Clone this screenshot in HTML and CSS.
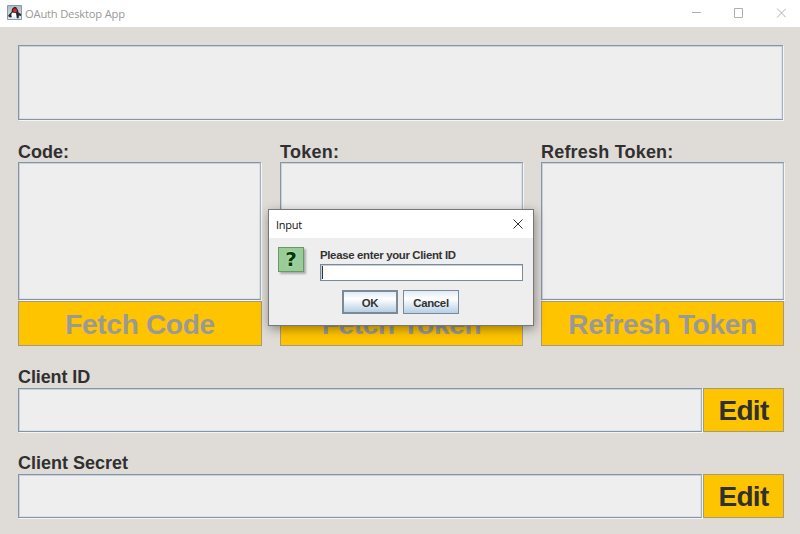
FILE: index.html
```html
<!DOCTYPE html>
<html lang="en">
<head>
<meta charset="utf-8">
<title>OAuth Desktop App</title>
<link rel="stylesheet" href="styles.css">
</head>
<body>
<header class="titlebar">
  <svg class="app-icon" width="15" height="15" viewBox="0 0 15 15">
    <defs><linearGradient id="tile" x2="0" y2="1"><stop stop-color="#a9b7c6"/><stop offset="1" stop-color="#e8edf2"/></linearGradient></defs>
    <path fill="url(#tile)" stroke="#8d98a5" d="M.5.5h14v14H.5z"/>
    <path fill="#252a30" d="M7 2h2l2 3 .5 2.500L14 9v2l-2-.5-.5 3L9.500 13 9 8 5 7.500 4.500 10l.5 2-2 .5L1 11l1-1.500L4.500 7 5 4z"/>
    <path fill="#fff" d="M5 8 9 8.500l.5 4.500-2-1.500-2.500 1L4.500 10z"/>
    <circle cx="8" cy="5.500" r="2" fill="#df2620"/>
  </svg>
  <span class="app-title">OAuth Desktop App</span>
  <svg class="window-controls" width="94" height="10" viewBox="0 0 94 10" fill="none" stroke="#b0b0b0">
    <path d="M0 4.500h9M42.500.5h8v9h-8zM85 .5l9 9M94 .5l-9 9"/>
  </svg>
</header>
<main class="content">
  <div class="field status"></div>
  <div class="columns">
    <section><h2 class="label code">Code:</h2><div class="field area"></div><button class="action" disabled>Fetch Code</button></section>
    <section><h2 class="label token">Token:</h2><div class="field area"></div><button class="action" disabled>Fetch Token</button></section>
    <section><h2 class="label refresh">Refresh Token:</h2><div class="field area"></div><button class="action" disabled>Refresh Token</button></section>
  </div>
  <section class="credential"><h2 class="label client">Client ID</h2><div class="row"><div class="field"></div><button class="action">Edit</button></div></section>
  <section class="credential"><h2 class="label secret">Client Secret</h2><div class="row"><div class="field"></div><button class="action">Edit</button></div></section>
</main>
<div class="dialog" role="dialog">
  <div class="dialog-title"><span>Input</span>
    <svg width="10" height="10" viewBox="0 0 10 10" stroke="#333"><path d="m.5.5 9 9M9.500.5l-9 9"/></svg>
  </div>
  <div class="dialog-body">
    <div class="question">?</div>
    <div class="prompt"><div class="prompt-text">Please enter your Client ID</div><div class="entry"><i class="caret"></i></div></div>
  </div>
  <div class="dialog-actions"><button class="metal default">OK</button><button class="metal">Cancel</button></div>
</div>
</body>
</html>
```
FILE: styles.css
```css
* { box-sizing: border-box; }
body { margin: 0; width: 800px; height: 534px; overflow: hidden; background: #dfdbd6; font-family: "Liberation Sans", sans-serif; }
.titlebar { height: 27px; background: #fff; display: flex; align-items: center; padding: 0 14px 0 7px; }
.app-icon { margin-top: -2px; }
.app-title { margin-left: 3px; font: 11.2px "Open Sans", sans-serif; color: #999; letter-spacing: -.2px; }
.window-controls { margin-left: auto; margin-top: -1px; }
.content { padding: 18px 16px 0 18px; }
.field { background: #eee; border: 1px solid #8495a6; border-right-color: #a3b0bd; box-shadow: 1px 1px #f5f5f5, inset 1px 1px #c9d1d9, inset -1px -1px #dce1e7; }
.status { width: 765px; height: 75px; }
.columns { display: grid; grid-template-columns: 244px 243px 243px; column-gap: 18px; margin-top: 21px; }
.label { margin: 0; height: 21px; font-size: 18px; line-height: 23px; font-weight: bold; color: #303030; white-space: nowrap; }
.token { letter-spacing: .25px; }
.refresh { letter-spacing: .2px; }
.client { letter-spacing: -.1px; }
.area { width: 243px; height: 138px; }
.action { display: block; width: 100%; height: 45px; margin: 1px 0 0; padding: 2px 0 0; background: #ffc400; border: 1px solid #a39b80; font: bold 28px "Liberation Sans", sans-serif; letter-spacing: -.3px; color: #303030; }
.action:disabled { color: #999; }
.credential { margin-top: 20px; }
.credential .label { height: 22px; }
.row { display: flex; gap: 1px; }
.row .field { width: 684px; height: 44px; }
.row .action { flex: none; width: 81px; height: 44px; margin: 0; padding-top: 1px; letter-spacing: -.7px; }
.dialog { position: absolute; left: 268px; top: 209px; width: 266px; height: 117px; background: #eee; border: 1px solid #777; box-shadow: 1px 3px 10px rgba(0,0,0,.38); }
.dialog-title { height: 28px; background: #fff; display: flex; justify-content: space-between; align-items: center; padding: 0 10px 0 7px; font: 11px "Open Sans", sans-serif; letter-spacing: -.25px; color: #111; }
.dialog-body { display: flex; padding: 9px 10px 0 9px; }
.question { width: 26px; height: 25px; margin-right: 16px; background: #99cc99; border: 1px solid #669966; box-shadow: 2px 2px 2px #aaa; color: #003b00; font: bold 20px/23px "DejaVu Sans", sans-serif; text-align: center; text-shadow: 0 0 2px #d8ffd8; }
.prompt { width: 203px; }
.prompt-text { height: 17px; font-size: 11.4px; line-height: 16px; font-weight: bold; letter-spacing: -.32px; color: #333; white-space: nowrap; }
.entry { height: 17px; border: 1px solid #7a8a99; background: #fff; box-shadow: inset 1px 1px #c4d0dc; padding: 1px; }
.caret { display: block; width: 1px; height: 13px; background: #333; }
.dialog-actions { display: flex; gap: 5px; margin: 9px 0 0 73px; }
.metal { width: 56px; height: 24px; padding: 1px 0 0; border: 1px solid #7a8a99; background: linear-gradient(#e0ebf4, #fff 35%, #b8cfe5); color: #333; font: bold 11.4px "Liberation Sans", sans-serif; letter-spacing: -.3px; }
.default { border-width: 2px; }
```
